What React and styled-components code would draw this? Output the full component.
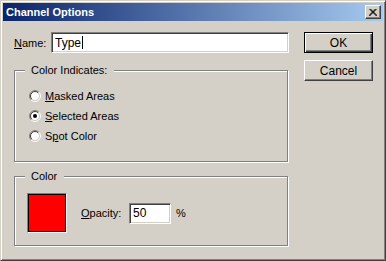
import React from "react";
import styled, { createGlobalStyle, css } from "styled-components";

const Global = createGlobalStyle`
  html, body { margin: 0; padding: 0; background: #d4d0c8; }
  body { font-family: "Liberation Sans", Arial, sans-serif; font-size: 11px; color: #000; }
`;

const Window = styled.div`
  width: 386px;
  height: 261px;
  box-sizing: border-box;
  background: #d4d0c8;
  border: 1px solid;
  border-color: #d4d0c8 #404040 #404040 #d4d0c8;
  box-shadow: inset 1px 1px 0 #fff, inset -1px -1px 0 #808080;
  padding: 2px;
  display: flex;
  flex-direction: column;
`;

const TitleBar = styled.div`
  height: 18px;
  background: linear-gradient(to right, #0a246a, #a6caf0);
  display: flex;
  align-items: center;
  justify-content: space-between;
  padding: 0 2px 0 3px;
`;

const Title = styled.span`
  color: #fff;
  font-weight: bold;
  font-size: 11px;
  line-height: 18px;
`;

const outset = css`
  background: #d4d0c8;
  border: 1px solid;
  border-color: #fff #404040 #404040 #fff;
  box-shadow: inset -1px -1px 0 #808080;
`;

const CloseBtn = styled.div`
  ${outset};
  box-sizing: border-box;
  width: 16px;
  height: 14px;
  display: flex;
  align-items: center;
  justify-content: center;
`;

const Body = styled.div`
  flex: 1;
  display: flex;
  padding: 11px 0 0 11px;
  gap: 15px;
`;

const LeftCol = styled.div`
  width: 275px;
  display: flex;
  flex-direction: column;
`;

const RightCol = styled.div`
  display: flex;
  flex-direction: column;
  gap: 7px;
`;

const NameRow = styled.div`
  display: flex;
  align-items: center;
  height: 21px;
`;

const Label = styled.span`
  width: ${(p) => p.$w || "auto"};
  white-space: nowrap;
`;

const U = styled.span`
  text-decoration: underline;
`;

const TextBox = styled.div`
  box-sizing: border-box;
  width: ${(p) => p.$w}px;
  height: 21px;
  background: #fff;
  border: 1px solid;
  border-color: #808080 #fff #fff #808080;
  box-shadow: inset 1px 1px 0 #404040, inset -1px -1px 0 #d4d0c8;
  padding: 0 3px;
  display: flex;
  align-items: center;
  font-size: 12px;
`;

const Caret = styled.span`
  display: inline-block;
  width: 1px;
  height: 13px;
  background: #000;
  margin-left: 1px;
`;

const Group = styled.div`
  position: relative;
  box-sizing: border-box;
  height: ${(p) => p.$h}px;
  margin-top: ${(p) => p.$mt}px;
  margin-right: 1px;
  border: 1px solid #808080;
  box-shadow: inset 1px 1px 0 #fff, 1px 1px 0 #fff;
`;

const Legend = styled.span`
  position: absolute;
  top: -7px;
  left: 10px;
  background: #d4d0c8;
  padding: 0 7px 0 6px;
  line-height: 13px;
`;

const RadioList = styled.div`
  display: flex;
  flex-direction: column;
  gap: 6px;
  padding: 18px 0 0 14px;
`;

const RadioRow = styled.div`
  display: flex;
  align-items: center;
  height: 14px;
  gap: 4px;
`;

const ColorRow = styled.div`
  display: flex;
  align-items: center;
  padding: 16px 0 0 12px;
`;

const Swatch = styled.div`
  box-sizing: border-box;
  width: 40px;
  height: 40px;
  background: #ff0000;
  border: 1px solid;
  border-color: #808080 #fff #fff #808080;
  box-shadow: inset 1px 1px 0 #000, inset -1px -1px 0 #000;
  margin-right: 14px;
`;

const OpacityGroup = styled.div`
  display: flex;
  align-items: center;
  gap: 5px;
`;

const Button = styled.div`
  box-sizing: border-box;
  width: 69px;
  height: 21px;
  display: flex;
  align-items: center;
  justify-content: center;
  background: #d4d0c8;
  font-size: 12px;
  ${(p) =>
    p.$default
      ? css`
          border: 1px solid #000;
          box-shadow: inset 1px 1px 0 #fff, inset -1px -1px 0 #404040,
            inset -2px -2px 0 #808080;
        `
      : css`
          border: 1px solid;
          border-color: #fff #404040 #404040 #fff;
          box-shadow: inset -1px -1px 0 #808080;
        `}
`;

function Radio({ checked }) {
  const a = 6 - 5.5 * 0.7071;
  const b = 6 + 5.5 * 0.7071;
  const c = 6 - 4.5 * 0.7071;
  const d = 6 + 4.5 * 0.7071;
  return (
    <svg width="12" height="12" viewBox="0 0 12 12">
      <circle cx="6" cy="6" r="4.2" fill="#fff" />
      <path d={`M ${a} ${b} A 5.5 5.5 0 0 1 ${b} ${a}`} stroke="#808080" fill="none" />
      <path d={`M ${b} ${a} A 5.5 5.5 0 0 1 ${a} ${b}`} stroke="#fff" fill="none" />
      <path d={`M ${c} ${d} A 4.5 4.5 0 0 1 ${d} ${c}`} stroke="#404040" fill="none" />
      <path d={`M ${d} ${c} A 4.5 4.5 0 0 1 ${c} ${d}`} stroke="#d4d0c8" fill="none" />
      {checked && <circle cx="6" cy="6" r="2" fill="#000" />}
    </svg>
  );
}

export default function App() {
  return (
    <>
      <Global />
      <Window>
        <TitleBar>
          <Title>Channel Options</Title>
          <CloseBtn>
            <svg width="8" height="7" viewBox="0 0 8 7">
              <path d="M0.5 0 L7.5 7 M1.5 0 L8.5 7 M7.5 0 L0.5 7 M6.5 0 L-0.5 7" stroke="#000" strokeWidth="1" />
            </svg>
          </CloseBtn>
        </TitleBar>
        <Body>
          <LeftCol>
            <NameRow>
              <Label $w="37px">
                <U>N</U>ame:
              </Label>
              <TextBox $w={238}>
                Type<Caret />
              </TextBox>
            </NameRow>
            <Group $h={92} $mt={17}>
              <Legend>Color Indicates:</Legend>
              <RadioList>
                <RadioRow>
                  <Radio />
                  <span>
                    <U>M</U>asked Areas
                  </span>
                </RadioRow>
                <RadioRow>
                  <Radio checked />
                  <span>
                    <U>S</U>elected Areas
                  </span>
                </RadioRow>
                <RadioRow>
                  <Radio />
                  <span>
                    S<U>p</U>ot Color
                  </span>
                </RadioRow>
              </RadioList>
            </Group>
            <Group $h={70} $mt={14}>
              <Legend>Color</Legend>
              <ColorRow>
                <Swatch />
                <OpacityGroup>
                  <Label $w="43px">
                    <U>O</U>pacity:
                  </Label>
                  <TextBox $w={42}>50</TextBox>
                  <span>%</span>
                </OpacityGroup>
              </ColorRow>
            </Group>
          </LeftCol>
          <RightCol>
            <Button $default>OK</Button>
            <Button>Cancel</Button>
          </RightCol>
        </Body>
      </Window>
    </>
  );
}
